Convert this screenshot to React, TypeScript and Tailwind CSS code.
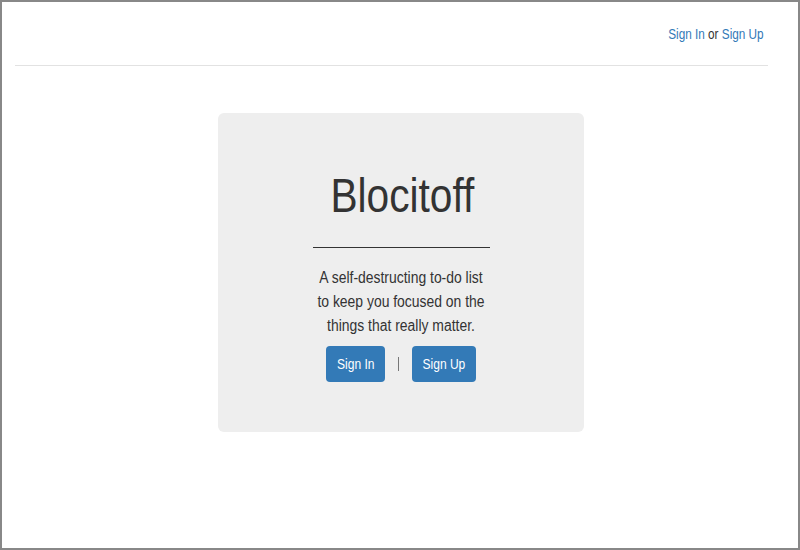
import React from "react";

export default function App() {
  const font = { fontFamily: '"Liberation Sans", Arial, sans-serif' };
  return (
    <div
      className="w-[800px] h-[550px] border-2 border-[#888] bg-white text-[#333] flex flex-col"
      style={font}
    >
      <div className="ml-[13px] mr-[30px] flex flex-col">
        <div className="pt-[22px] pr-[4px] flex justify-end text-[14px] leading-[20px]">
          <div className="inline-block scale-x-[0.84] origin-right whitespace-nowrap">
            <a className="text-[#337ab7]" href="#">Sign In</a>
            <span className="text-[#333]"> or </span>
            <a className="text-[#337ab7]" href="#">Sign Up</a>
          </div>
        </div>
        <div className="mt-[21px] h-px bg-[#e2e2e2]" />
      </div>
      <div className="mt-[47px] flex justify-center pl-[2px]">
        <div className="w-[366px] rounded-[6px] bg-[#eeeeee] pt-[55px] pb-[50px] flex flex-col items-center">
          <h1 className="text-[49px] leading-[54px] text-[#333] pl-[4px] scale-x-[0.83] whitespace-nowrap">
            Blocitoff
          </h1>
          <div className="mt-[25px] h-px w-[177px] bg-[#333]" />
          <p className="mt-[18px] text-[16px] leading-[24px] text-center text-[#333] w-[200px] scale-x-[0.87]">
            A self-destructing to-do list
            <br />
            to keep you focused on the
            <br />
            things that really matter.
          </p>
          <div className="mt-[8px] flex items-center">
            <button className="h-[36px] w-[59px] rounded-[4px] bg-[#337ab7] text-white text-[14px] leading-[20px] flex items-center justify-center">
              <span className="inline-block scale-x-[0.86] whitespace-nowrap">Sign In</span>
            </button>
            <span className="mx-[13px] w-px h-[14px] bg-[#777]" />
            <button className="h-[36px] w-[64px] rounded-[4px] bg-[#337ab7] text-white text-[14px] leading-[20px] flex items-center justify-center">
              <span className="inline-block scale-x-[0.86] whitespace-nowrap">Sign Up</span>
            </button>
          </div>
        </div>
      </div>
    </div>
  );
}
